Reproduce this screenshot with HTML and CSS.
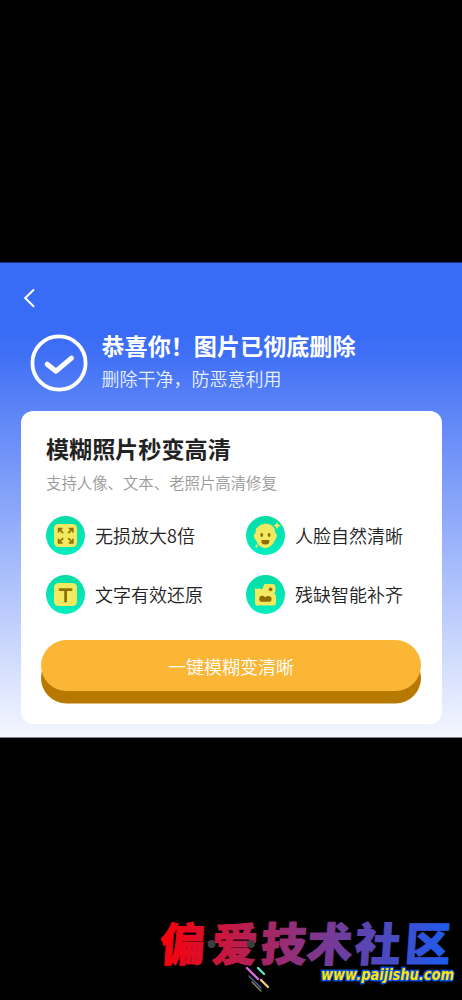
FILE: index.html
```html
<!DOCTYPE html>
<html lang="zh-CN">
<head>
<meta charset="utf-8">
<title>图片已彻底删除</title>
<link rel="stylesheet" href="styles.css">
</head>
<body>
<main class="panel">
  <nav class="nav">
    <svg class="back" viewBox="0 0 12 20"><path d="M10.5 2 2.2 10l8.3 8.3"/></svg>
  </nav>
  <header class="status">
    <svg class="status-icon" viewBox="0 0 58 58"><circle cx="29" cy="29" r="26.6"/><path class="tick" d="M17.2 30.2 26 37.2 41.5 24.2"/></svg>
    <div>
      <h1 class="status-title">恭喜你！图片已彻底删除</h1>
      <p class="status-text">删除干净，防恶意利用</p>
    </div>
  </header>
  <section class="card">
    <h2 class="card-title">模糊照片秒变高清</h2>
    <p class="card-text">支持人像、文本、老照片高清修复</p>
    <ul class="features">
      <li class="feature">
        <svg class="feature-icon" viewBox="0 0 39 39">
          <rect x="8" y="8" width="23" height="23" rx="4.5"/>
          <path class="line" d="M17.2 17.2 13 13M12.6 16.6v-4h4M22.2 17.2 26.4 13M22.8 12.6h4v4M17.2 22.2 13 26.4M12.6 22.8v4h4M22.2 22.2l4.2 4.2M26.8 22.8v4h-4"/>
        </svg>
        <span>无损放大8倍</span>
      </li>
      <li class="feature">
        <svg class="feature-icon" viewBox="0 0 39 39">
          <path d="M9.4 17 10 12.5 14.5 9 19.3 7.6 24.5 8.6 28.2 12 29.6 17.2Q31.3 18 30.8 20.5 30.2 23.4 28.8 24.2 27.6 28.4 24 30.4 21.5 32.2 19.3 32.2 17 32.2 14.5 30.4 11 28.2 10 24.2 8.4 23.4 7.9 20.5 7.6 18 9.4 17Z"/>
          <path d="M31 5.8 32.2 8.5 35 9.6 32.2 10.8 31 13.6 29.8 10.8 27 9.6 29.8 8.5ZM10.7 27.8 11.4 29.4 13 30 11.4 30.7 10.7 32.3 10 30.7 8.4 30 10 29.4Z"/>
          <g class="ink"><ellipse cx="15.7" cy="19" rx="1.4" ry="2"/><ellipse cx="23.1" cy="19" rx="1.4" ry="2"/><path d="M15.5 24h7.8q.6 4.5-3.9 4.5t-3.9-4.5Z"/></g>
        </svg>
        <span>人脸自然清晰</span>
      </li>
      <li class="feature">
        <svg class="feature-icon" viewBox="0 0 39 39">
          <rect x="8" y="8" width="23" height="23" rx="4.5"/>
          <path class="line letter" d="M14 14.6h11.2M19.6 14.6v11.6"/>
        </svg>
        <span>文字有效还原</span>
      </li>
      <li class="feature">
        <svg class="feature-icon" viewBox="0 0 39 39">
          <path d="M9 13 11.2 14 13 13.4 16.2 14.2 18.4 9H26Q29.5 9 29.5 12.4V16L28.3 18.5 30 20.5V28Q30 30.5 27.5 30.5H16L14 30 12.2 30.8Q9 31 9 28Z"/>
          <g class="ink"><circle cx="24.6" cy="14.3" r="1.9"/><path d="M13.3 23.5Q13.3 20.8 16 20.8 18 20.8 19.2 22.2 21.5 20.4 23.7 21.3 26.2 22.4 25.4 25.4 25 26.8 23.4 26.8H15.4Q13.3 26.8 13.3 23.5Z"/></g>
        </svg>
        <span>残缺智能补齐</span>
      </li>
    </ul>
    <button class="action">一键模糊变清晰</button>
  </section>
</main>
<footer class="brand">
  <svg class="brand-art" viewBox="0 0 312 90">
    <defs><linearGradient id="ink" gradientUnits="userSpaceOnUse" x1="10" y1="0" x2="300" y2="0"><stop offset="0" stop-color="#fb0008"/><stop offset=".48" stop-color="#8c3280"/><stop offset="1" stop-color="#1b5cf2"/></linearGradient></defs>
    <text class="brand-name" transform="translate(0 51) skewX(-4)" x="9 61 110 156 204 254" y="0">偏爱技术社区</text>
    <circle cx="61.5" cy="34" r="4" fill="#3d3d3d"/><circle cx="101" cy="34" r="4" fill="#3d3d3d"/>
    <g class="streaks">
      <path d="m97 58 11 11" stroke="#dc6ce0"/><path d="m108 58 6 6" stroke="#62e4d2"/><path d="m111 70 7 7" stroke="#efc979"/><path class="thin" d="m99 66 12 12" stroke="#49639b"/><path class="thin" d="m102 72 9 9" stroke="#998862"/>
    </g>
    <text class="brand-url" x="171" y="70" textLength="133" lengthAdjust="spacingAndGlyphs">www.paijishu.com</text>
  </svg>
</footer>
</body>
</html>
```
FILE: styles.css
```css
* { box-sizing: border-box; }
body {
  margin: 0;
  height: 1000px;
  padding-top: 262px;
  display: flex;
  flex-direction: column;
  background: #000;
  font-family: "Noto Sans CJK SC", sans-serif;
}
h1, h2, p, ul { margin: 0; padding: 0; }
.panel {
  flex: none;
  height: 476px;
  padding: 0 20.5px;
  border-top: 1px solid #1d3880;
  border-bottom: 1px solid #838488;
  background: linear-gradient(#386bf6 0, #386bf6 70px, #4070f6 92px, #5c84f7 146px, #f5f7ff 100%);
}
.nav { height: 70.5px; padding: 25px 0 0 2.5px; }
.back { display: block; width: 12px; height: 20px; fill: none; stroke: #fff; stroke-width: 2; stroke-linecap: round; stroke-linejoin: round; }
.status { display: flex; height: 77.7px; padding-left: 9.5px; gap: 13.5px; color: #fff; }
.status-icon { width: 58px; height: 58px; fill: none; stroke: #fff; stroke-width: 3.8; }
.tick { stroke-width: 5; stroke-linecap: round; stroke-linejoin: round; }
.status-title { margin-top: -1.5px; font-size: 23.1px; line-height: 26px; font-weight: 700; white-space: nowrap; }
.status-text { margin-top: 8px; font-size: 18px; line-height: 24px; font-weight: 350; color: #ebf0ff; }
.card { height: 313px; padding: 21px 20.5px 0; border-radius: 12px; background: #fff; }
.card-title { padding-left: 5px; font-size: 23.1px; line-height: 32px; font-weight: 700; color: #222; }
.card-text { padding-left: 5px; margin-top: 5.5px; font-size: 15.4px; line-height: 24px; font-weight: 350; color: #999; }
.features { display: grid; grid-template-columns: 200px 1fr; row-gap: 20px; margin-top: 22.5px; padding-left: 5px; list-style: none; }
.feature { display: flex; align-items: center; height: 39px; gap: 10px; font-size: 18px; line-height: 26px; font-weight: 350; color: #222; white-space: nowrap; }
.feature span { margin-top: -1px; }
.feature-icon { width: 39px; height: 39px; border-radius: 50%; background: linear-gradient(#06dca6, #03edc0); fill: #f1ea60; }
.line { fill: none; stroke: #8e7206; stroke-width: 1.7; }
.letter { stroke-width: 2.8; stroke-linecap: round; }
.ink { fill: #8e6d00; }
.action { display: block; width: 380px; height: 51px; margin-top: 26px; padding: 0; border: 0; border-radius: 26px; background: #fbb636; box-shadow: 0 12.5px 0 #b87900; color: #fff; font: 350 18px/26px "Noto Sans CJK SC", sans-serif; }
.brand { margin: 172px 0 0 150px; height: 90px; }
.brand-art { display: block; width: 312px; height: 90px; overflow: visible; }
.brand-name { font-size: 45.5px; font-weight: 900; fill: url(#ink); stroke: url(#ink); stroke-width: 1; stroke-linejoin: round; }
.brand-url { font: italic 700 15px "DejaVu Sans", sans-serif; fill: #ffe500; stroke: #064edb; stroke-width: 3; stroke-linejoin: round; paint-order: stroke; }
.streaks { fill: none; stroke-width: 2.4; stroke-linecap: round; }
.thin { stroke-width: 1.3; }
```
